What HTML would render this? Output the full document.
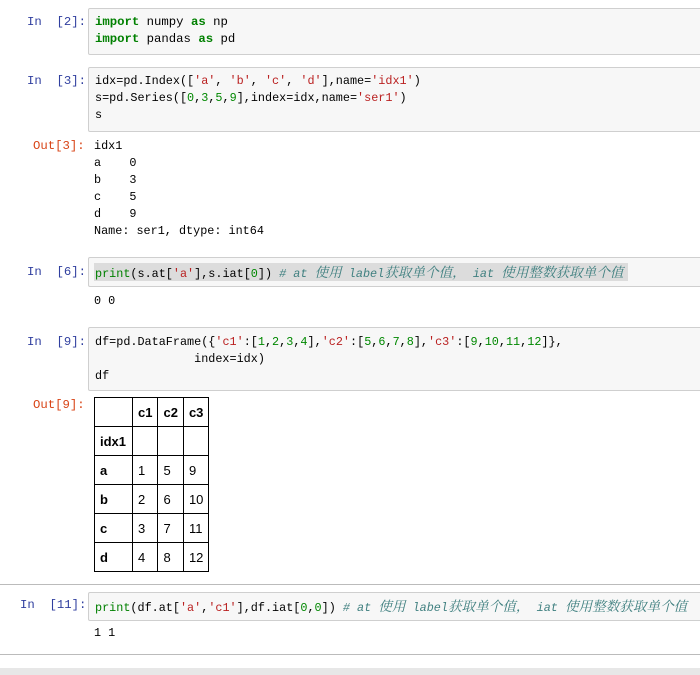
<!DOCTYPE html>
<html><head><meta charset="utf-8"><style>
body{margin:0;width:700px;height:675px;background:#fff;position:relative;overflow:hidden;font-family:"Liberation Mono","Noto Sans CJK SC",monospace;font-size:11.8px;color:#000}
.box{position:absolute;left:88px;width:620px;background:#f7f7f7;border:1px solid #cfcfcf;border-radius:2px;box-sizing:border-box}
.t{position:absolute;white-space:pre;line-height:17px}
.pi{position:absolute;color:#303f9f;white-space:pre;font-size:12.3px}
.po{position:absolute;color:#d84315;white-space:pre;font-size:12.3px}
.k{color:#008000;font-weight:bold}
.s{color:#ba2121}
.n{color:#080}
.b{color:#008000}
.c{color:#408080;font-style:italic}
.z{font-size:13.6px;font-family:"Noto Serif CJK SC","Noto Sans CJK SC",serif}
table{position:absolute;left:94px;top:397px;border-collapse:collapse;font-family:"Liberation Sans",sans-serif;font-size:13px}
td,th{border:1px solid #000;height:28px;padding:0 5px;text-align:left;font-weight:normal}
th{font-weight:bold}
</style></head><body>
<div class="pi" style="left:27px;top:15px">In  [2]:</div>
<div class="box" style="top:8px;height:47px"></div>
<div class="t" style="left:95px;top:14px;font-size:12.3px"><span class="k">import</span> numpy <span class="k">as</span> np
<span class="k">import</span> pandas <span class="k">as</span> pd</div>

<div class="pi" style="left:27px;top:74px">In  [3]:</div>
<div class="box" style="top:67px;height:65px"></div>
<div class="t" style="left:95px;top:73px">idx=pd.Index([<span class="s">'a'</span>, <span class="s">'b'</span>, <span class="s">'c'</span>, <span class="s">'d'</span>],name=<span class="s">'idx1'</span>)
s=pd.Series([<span class="n">0</span>,<span class="n">3</span>,<span class="n">5</span>,<span class="n">9</span>],index=idx,name=<span class="s">'ser1'</span>)
s</div>

<div class="po" style="left:33px;top:139px">Out[3]:</div>
<div class="t" style="left:94px;top:138px">idx1
a    0
b    3
c    5
d    9
Name: ser1, dtype: int64</div>

<div class="pi" style="left:27px;top:265px">In  [6]:</div>
<div class="box" style="top:257px;height:30px"></div>
<div style="position:absolute;left:94px;top:263px;width:534px;height:18px;background:#dcdcdc"></div>
<div class="t" style="left:95px;top:263px"><span class="b">print</span>(s.at[<span class="s">'a'</span>],s.iat[<span class="n">0</span>]) <span class="c"># at <span class="z">使用</span> label<span class="z">获取单个值，</span> iat <span class="z">使用整数获取单个值</span></span></div>
<div class="t" style="left:94px;top:293px">0 0</div>

<div class="pi" style="left:27px;top:335px">In  [9]:</div>
<div class="box" style="top:327px;height:64px"></div>
<div class="t" style="left:95px;top:334px">df=pd.DataFrame({<span class="s">'c1'</span>:[<span class="n">1</span>,<span class="n">2</span>,<span class="n">3</span>,<span class="n">4</span>],<span class="s">'c2'</span>:[<span class="n">5</span>,<span class="n">6</span>,<span class="n">7</span>,<span class="n">8</span>],<span class="s">'c3'</span>:[<span class="n">9</span>,<span class="n">10</span>,<span class="n">11</span>,<span class="n">12</span>]},
              index=idx)
df</div>

<div class="po" style="left:33px;top:398px">Out[9]:</div>
<table>
<tr><th style="width:27px"></th><th>c1</th><th>c2</th><th>c3</th></tr>
<tr><th>idx1</th><td></td><td></td><td></td></tr>
<tr><th>a</th><td>1</td><td>5</td><td>9</td></tr>
<tr><th>b</th><td>2</td><td>6</td><td>10</td></tr>
<tr><th>c</th><td>3</td><td>7</td><td>11</td></tr>
<tr><th>d</th><td>4</td><td>8</td><td>12</td></tr>
</table>

<div style="position:absolute;left:0;top:584px;width:700px;height:69px;border-top:1px solid #bbb;border-bottom:1px solid #bbb"></div>
<div class="pi" style="left:20px;top:598px">In  [11]:</div>
<div class="box" style="top:592px;height:29px"></div>
<div class="t" style="left:95px;top:597px"><span class="b">print</span>(df.at[<span class="s">'a'</span>,<span class="s">'c1'</span>],df.iat[<span class="n">0</span>,<span class="n">0</span>]) <span class="c"># at <span class="z">使用</span> label<span class="z">获取单个值，</span> iat <span class="z">使用整数获取单个值</span></span></div>
<div class="t" style="left:94px;top:625px">1 1</div>
<div style="position:absolute;left:0;top:668px;width:700px;height:7px;background:#e7e7e7"></div>
</body></html>
